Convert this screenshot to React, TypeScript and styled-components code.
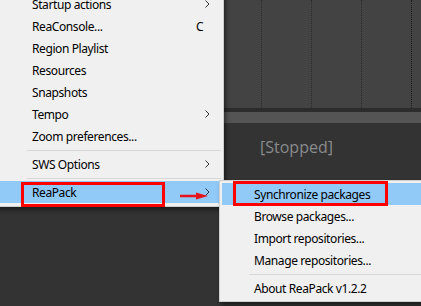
import styled, { createGlobalStyle } from "styled-components";

const GlobalStyle = createGlobalStyle`
  html, body {
    margin: 0;
    padding: 0;
    background: #333333;
    overflow: hidden;
  }
`;

interface MenuEntry {
  label?: string;
  shortcut?: string;
  sub?: boolean;
  active?: boolean;
  separator?: boolean;
}

const mainItems: MenuEntry[] = [
  { label: "Startup actions", sub: true },
  { label: "ReaConsole...", shortcut: "C" },
  { label: "Region Playlist" },
  { label: "Resources" },
  { label: "Snapshots" },
  { label: "Tempo", sub: true },
  { label: "Zoom preferences..." },
  { separator: true },
  { label: "SWS Options", sub: true },
  { separator: true },
  { label: "ReaPack", sub: true, active: true },
];

const subItems: MenuEntry[] = [
  { label: "Synchronize packages", active: true },
  { label: "Browse packages..." },
  { label: "Import repositories..." },
  { label: "Manage repositories..." },
  { separator: true },
  { label: "About ReaPack v1.2.2" },
];

const Chevron = () => (
  <svg width="5" height="8" viewBox="0 0 5 8">
    <polyline points="0.5,0.5 4,4 0.5,7.5" fill="none" stroke="#333" strokeWidth="1" />
  </svg>
);

//Menu list
function Menu({ items, gutter }: { items: MenuEntry[]; gutter: number }) {
  return (
    <>
      {items.map((it, i) =>
        it.separator ? (
          <Separator key={i} gutter={gutter} />
        ) : (
          <Row key={i} active={it.active} gutter={gutter}>
            <Label>{it.label}</Label>
            {it.shortcut && <Shortcut>{it.shortcut}</Shortcut>}
            {it.sub && (
              <Arrow>
                <Chevron />
              </Arrow>
            )}
          </Row>
        )
      )}
    </>
  );
}

function App() {
  return (
    <Stage>
      <GlobalStyle />
      <TrackArea>
        {[0, 1, 2, 3].map((i) => (
          <GridLine key={i} strong={i === 3} />
        ))}
      </TrackArea>
      <DarkBand />
      <ScrollBand />
      <Transport>
        <Status>[Stopped]</Status>
      </Transport>

      <MainMenu>
        <Menu items={mainItems} gutter={36} />
      </MainMenu>
      <SubMenu>
        <Menu items={subItems} gutter={35} />
      </SubMenu>

      <Mark left={21} top={182} width={144} height={25} />
      <Mark left={233} top={181} width={155} height={25} />
      <RedArrow width="30" height="8" viewBox="0 0 30 8">
        <line x1="0" y1="4" x2="20" y2="4" stroke="#e8141b" strokeWidth="2.5" />
        <polygon points="16,0.5 28,4 16,7.5" fill="#e8141b" />
      </RedArrow>
    </Stage>
  );
}

const Stage = styled.div`
  position: relative;
  width: 421px;
  height: 306px;
  display: flex;
  flex-direction: column;
  background: #333333;
  overflow: hidden;
  font-family: "Noto Sans", "Open Sans", sans-serif;
`;

const TrackArea = styled.div`
  height: 108px;
  background: #434343;
  display: flex;
  padding-left: 261px;
  gap: 49px;
`;

const GridLine = styled.div<{ strong?: boolean }>`
  width: 0;
  border-left: 1px dotted ${(p) => (p.strong ? "#1c1c1c" : "#2b2b2b")};
`;

const DarkBand = styled.div`
  height: 4px;
  background: #2c2c2c;
`;

const ScrollBand = styled.div`
  height: 11px;
  background: #545454;
`;

const Transport = styled.div`
  flex: 1;
  background: #333333;
  padding: 14px 0 0 260px;
`;

const Status = styled.div`
  color: #8a8b8d;
  font-size: 16px;
  line-height: 20px;
  font-family: "Open Sans", "Noto Sans", sans-serif;
`;

const MenuBox = styled.div`
  position: absolute;
  background: #f0f0f0;
  border: 1px solid #cfcfcf;
  padding: 2px;
  box-shadow: 2px 3px 4px rgba(0, 0, 0, 0.45);
  font-size: 12px;
  letter-spacing: -0.4px;
  color: #000;
`;

const MainMenu = styled(MenuBox)`
  left: -4px;
  top: -10px;
  width: 222px;
  padding-bottom: 3px;
`;

const SubMenu = styled(MenuBox)`
  left: 219px;
  top: 180px;
  width: 240px;
`;

const Row = styled.div<{ active?: boolean; gutter: number }>`
  height: 22px;
  display: flex;
  align-items: center;
  padding-left: ${(p) => p.gutter - 3}px;
  padding-right: 10px;
  background: ${(p) => (p.active ? "#91c9f7" : "transparent")};
`;

const Label = styled.span`
  flex: 1;
  white-space: nowrap;
`;

const Shortcut = styled.span`
  width: 13px;
  margin-right: 2px;
`;

const Arrow = styled.span`
  display: flex;
  align-items: center;
  width: 6px;
`;

const Separator = styled.div<{ gutter: number }>`
  height: 6px;
  margin-left: ${(p) => p.gutter - 8}px;
  display: flex;
  align-items: center;
  &::after {
    content: "";
    flex: 1;
    height: 1px;
    background: #d7d7d7;
  }
`;

const Mark = styled.div<{ left: number; top: number; width: number; height: number }>`
  position: absolute;
  left: ${(p) => p.left}px;
  top: ${(p) => p.top}px;
  width: ${(p) => p.width}px;
  height: ${(p) => p.height}px;
  box-sizing: border-box;
  border: 3px solid #ff0000;
`;

const RedArrow = styled.svg`
  position: absolute;
  left: 180px;
  top: 192px;
`;

export default App;
